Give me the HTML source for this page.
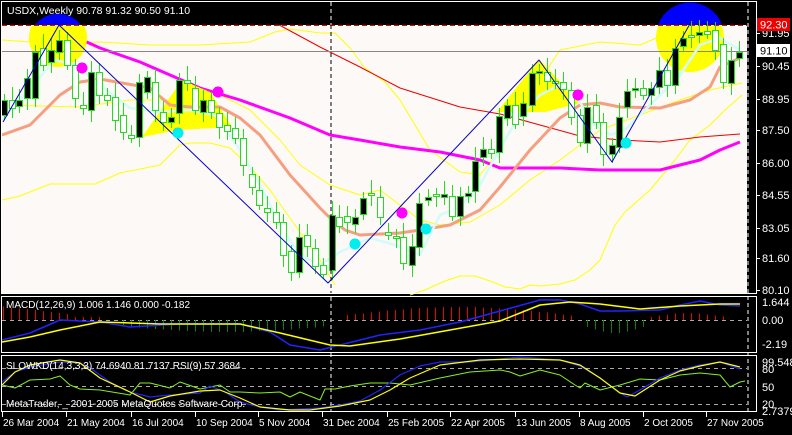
<!DOCTYPE html>
<html><head><meta charset="utf-8">
<style>
html,body{margin:0;padding:0;background:#000;}
body{width:792px;height:430px;overflow:hidden;font-family:"Liberation Sans",sans-serif;}
svg text{font-family:"Liberation Sans",sans-serif;font-size:10px;fill:#fff;}
</style></head>
<body>
<svg id="s" width="792" height="430" viewBox="0 0 792 430" xmlns="http://www.w3.org/2000/svg" shape-rendering="crispEdges">
<rect width="792" height="430" fill="#000"/>
<rect x="2" y="25" width="745" height="268" fill="#fdf9f7"/>
<g id="main"></g>
<text x="7" y="14" style="font-size:10.5px">USDX,Weekly  90.78 91.32 90.50 91.10</text>
<rect x="1.5" y="1.5" width="755" height="292" fill="none" stroke="#fff"/>
<rect x="1.5" y="296.5" width="755" height="56" fill="none" stroke="#fff"/>
<rect x="1.5" y="355.5" width="755" height="56" fill="none" stroke="#fff"/>
<line x1="748" y1="2" x2="748" y2="411" stroke="#fff" stroke-dasharray="4,3"/>
<line x1="331" y1="2" x2="331" y2="25" stroke="#fff" stroke-dasharray="4,3"/>
<line x1="331" y1="25" x2="331" y2="293" stroke="#000" stroke-dasharray="4,3"/>
<line x1="331" y1="297" x2="331" y2="411" stroke="#fff" stroke-dasharray="4,3"/>
<g id="axis"></g>
<rect x="757" y="18" width="33" height="13" fill="#e00"/>
<text x="760" y="28.5" style="fill:#fff;font-size:11px">92.30</text>
<rect x="756" y="44" width="34" height="13" fill="#fff"/>
<text x="760" y="54.5" style="fill:#000;font-size:11px">91.10</text>
<g id="macd"></g>
<g id="stoch"></g>
<text x="6" y="308">MACD(12,26,9) 1.006 1.146 0.000 -0.182</text>
<text x="6" y="369">SLOWKD(14,3,3,3) 74.6940 81.7137  RSI(9) 57.3684</text>
<text x="6" y="407">MetaTrader, _ 2001-2005 MetaQuotes Software Corp.</text>
<g id="dates"></g>
</svg>
<script>
const NS="http://www.w3.org/2000/svg";
function el(g,tag,attrs,txt){const e=document.createElementNS(NS,tag);for(const k in attrs)e.setAttribute(k,attrs[k]);if(txt!==undefined)e.textContent=txt;document.getElementById(g).appendChild(e);return e;}
function pl(g,pts,col,w,extra){const a={points:pts.map(p=>p.join(',')).join(' '),fill:'none',stroke:col,'stroke-width':w,'shape-rendering':'auto','stroke-linejoin':'round'};Object.assign(a,extra||{});el(g,'polyline',a);}
const M='main';
pl(M,[[2,200],[20,196],[50,184],[95,184],[120,173],[160,165],[180,145],[190,143],[210,143],[230,148],[250,167],[270,190],[300,232],[320,260],[335,285]],'#ff0',1);
pl(M,[[2,40],[60,44],[100,42],[150,45],[200,45],[250,42],[275,32],[290,29],[320,33],[335,33],[350,48],[365,68],[385,82],[400,100],[430,150],[460,172],[480,175],[500,150],[530,95],[560,50],[600,42],[640,45],[680,28],[720,18],[742,15]],'#ff0',1);
pl(M,[[2,105],[40,106],[80,107],[130,100],[170,100],[200,97],[220,95],[250,110],[280,140],[300,165],[330,185],[360,195],[380,190],[420,220],[440,225],[470,222],[500,205],[530,180],[560,160],[600,130],[640,115],[680,100],[710,90],[742,83]],'#ff0',1);
pl(M,[[410,295],[425,290],[445,281],[460,276],[475,276],[490,281],[505,287],[520,289],[530,285],[540,286],[560,284],[575,280],[590,270],[600,260],[615,225],[625,212],[650,190],[665,172],[675,160],[690,140],[710,125],[725,110],[742,95]],'#ff0',1);
pl(M,[[228,0],[270,20],[320,47],[360,67],[400,88],[460,107],[500,114],[540,125],[580,136],[620,140],[660,142],[700,137],[740,134]],'#e00',1);
pl(M,[[2,10],[30,20],[60,30],[100,48],[140,62],[200,88],[240,100],[290,118],[330,135],[360,140],[400,147],[440,152],[480,160],[500,168],[560,168],[600,170],[660,170],[700,160],[720,150],[740,142]],'#f0f',3);
el(M,'circle',{cx:58,cy:38,r:29,fill:'#ff0'});
el(M,'circle',{cx:690,cy:38,r:34,fill:'#ff0'});
el(M,'rect',{x:0,y:0,width:747,height:25,fill:'#000'});
el(M,'path',{d:'M35,25 A29,29 0 0 1 81,25 Z',fill:'#00f'});
el(M,'path',{d:'M658,25 A34,34 0 0 1 722,25 Z',fill:'#00f','shape-rendering':'auto'});
el(M,'polygon',{points:'142,137 182,80 210,92 232,127 178,130',fill:'#ff0'});
el(M,'polygon',{points:'497,112 539,59 580,103 545,112',fill:'#ff0'});
el(M,'line',{x1:2,y1:51.5,x2:747,y2:51.5,stroke:'#888'});
el(M,'line',{x1:2,y1:25.5,x2:747,y2:25.5,stroke:'#e00','stroke-dasharray':'5,3'});
pl(M,[[2,135],[30,125],[60,95],[80,82],[100,79],[150,88],[170,105],[190,107],[220,107],[240,118],[260,135],[290,175],[320,208],[330,218],[345,230],[360,235],[400,233],[420,230],[450,225],[480,210],[500,187],[530,150],[560,118],[580,105],[600,103],[620,107],[660,108],[690,100],[710,87],[720,67],[740,58]],'#f4a080',3);
pl(M,[[2,120],[30,88],[55,60],[75,65],[100,85],[130,108],[160,112],[190,110],[215,115],[240,150],[260,185],[280,225],[300,255],[320,265],[340,252],[370,238],[395,245],[420,255],[440,215],[460,207],[480,185],[500,148],[520,115],[540,95],[560,85],[575,95],[595,125],[610,135],[625,130],[650,105],[680,75],[700,45],[720,38],[740,50]],'#d4fafa',2.5);
const C=[[4,100,115,'b'],[12,100,108,'w'],[19,100,106,'b'],[27,78,98,'b'],[35,52,98,'b'],[43,48,65,'w'],[51,50,62,'b'],[59,40,52,'b'],[67,40,65,'w'],[75,65,98,'w'],[83,105,108,'w'],[91,72,110,'b'],[99,72,95,'w'],[107,95,100,'w'],[115,97,120,'w'],[123,115,132,'w'],[131,135,138,'w'],[139,82,137,'b'],[147,77,92,'b'],[155,82,110,'w'],[163,112,122,'w'],[171,117,122,'b'],[179,80,113,'b'],[187,80,83,'w'],[195,88,110,'w'],[203,100,112,'b'],[211,100,112,'w'],[219,113,127,'w'],[227,125,131,'w'],[235,128,138,'w'],[243,138,165,'w'],[252,174,187,'w'],[259,190,205,'w'],[267,208,212,'w'],[276,212,222,'w'],[283,222,255,'w'],[291,251,272,'w'],[299,237,272,'b'],[307,235,246,'w'],[315,248,266,'w'],[323,265,274,'w'],[332,215,270,'b'],[339,217,226,'w'],[347,216,222,'w'],[355,217,224,'b'],[363,198,214,'b'],[371,193,195,'w'],[380,197,217,'w'],[388,232,235,'w'],[396,236,238,'w'],[403,237,263,'w'],[412,246,265,'b'],[419,203,247,'b'],[428,197,200,'b'],[436,194,196,'w'],[444,194,197,'b'],[452,196,216,'w'],[460,196,216,'b'],[468,193,196,'b'],[475,161,191,'b'],[483,149,157,'b'],[491,149,153,'w'],[499,116,152,'b'],[507,105,118,'b'],[515,105,124,'w'],[523,103,116,'b'],[532,73,105,'b'],[539,71,73,'b'],[547,72,81,'w'],[555,81,83,'w'],[563,82,89,'w'],[571,90,117,'w'],[580,115,142,'w'],[587,107,143,'b'],[596,105,122,'w'],[603,122,154,'w'],[612,145,154,'b'],[619,117,147,'b'],[627,91,107,'b'],[635,88,90,'b'],[643,88,95,'w'],[651,88,95,'b'],[659,70,87,'b'],[667,70,85,'w'],[675,48,85,'b'],[683,38,46,'b'],[691,35,37,'w'],[699,32,35,'b'],[707,31,34,'w'],[715,30,50,'w'],[723,44,82,'w'],[731,60,83,'b'],[739,52,58,'b']];
C.forEach((c,i)=>{const [x,t,b,ty]=c;const wt=t-6-((i*7)%9),wb=b+5+((i*5)%8);
el(M,'line',{x1:x+0.5,y1:wt,x2:x+0.5,y2:wb,stroke:'#2d2'});
el(M,'rect',{x:x-2.5,y:t+0.5,width:6,height:Math.max(2,b-t),fill:ty=='b'?'#000':'#fff',stroke:'#2d2'});});
pl(M,[[3,122],[59,25],[328,283],[539,60],[612,162],[691,22]],'#00c',1);
[[82,68],[218,92],[402,213],[578,95]].forEach(p=>el(M,'circle',{cx:p[0],cy:p[1],r:5.5,fill:'#f0f'}));
[[178,133],[355,244],[426,229],[626,143]].forEach(p=>el(M,'circle',{cx:p[0],cy:p[1],r:5.5,fill:'#0ee'}));
[['91.95',33],['90.45',66],['88.95',99],['87.50',130],['86.00',163],['84.55',195],['83.05',228],['81.60',258],['80.10',290]].forEach(a=>{el('axis','text',{x:762,y:a[1]+4,style:'font-size:11px'},a[0]);el('axis','line',{x1:757,y1:a[1]+0.5,x2:760,y2:a[1]+0.5,stroke:'#fff'});});
[['1.644',302],['0.00',320],['-2.19',344]].forEach(a=>{el('axis','text',{x:762,y:a[1]+4,style:'font-size:11px'},a[0]);});
[['99.5484',362],['80',369],['50',387],['20',404],['2.7379',411]].forEach(a=>{el('axis','text',{x:762,y:a[1]+4,style:'font-size:11px'},a[0]);});
const Z='macd';
el(Z,'line',{x1:2,y1:320.5,x2:747,y2:320.5,stroke:'#aaa','stroke-dasharray':'4,4'});
for(let x=3;x<745;x+=8){let h=0;
 if(x<75)h=-(14-x*0.12);else if(x<100)h=-3;else if(x<120)h=0;else if(x<330)h=6+6*Math.sin((x-120)/210*Math.PI);else if(x<340)h=0;else if(x<575)h=-(4+9*Math.sin((x-340)/235*Math.PI));else if(x<580)h=0;else if(x<650)h=4+9*Math.sin((x-580)/70*Math.PI);else if(x<725)h=-(3+4*Math.sin((x-650)/75*Math.PI));
 if(h!=0)el(Z,'line',{x1:x+0.5,y1:320,x2:x+0.5,y2:320+h,stroke:h<0?'#e00':'#080'});}
pl(Z,[[2,340],[30,333],[60,320],[100,322],[130,327],[180,324],[240,324],[270,332],[290,345],[320,350],[340,345],[380,335],[420,330],[460,322],[500,311],[540,300],[560,300],[580,304],[600,311],[620,311],[660,310],[680,305],[700,301],[720,305],[740,306]],'#22f',1.5);
pl(Z,[[2,342],[30,337],[60,330],[100,322],[160,324],[240,324],[280,333],[330,345],[350,346],[400,339],[450,330],[500,321],[540,305],[570,302],[600,304],[640,309],[680,306],[720,304],[740,304]],'#ff0',1.5);
const S='stoch';
[368.5,386.5,404.5].forEach(y=>el(S,'line',{x1:2,y1:y,x2:747,y2:y,stroke:'#aaa','stroke-dasharray':'4,4'}));
pl(S,[[2,385],[15,388],[30,380],[50,379],[60,376],[70,385],[80,389],[100,390],[130,395],[140,383],[150,383],[170,388],[180,382],[200,389],[210,387],[220,385],[230,392],[240,392],[260,393],[280,392],[290,397],[300,392],[310,396],[320,400],[325,389],[335,389],[350,386],[370,383],[390,383],[410,385],[440,378],[470,372],[500,370],[510,372],[520,376],[540,370],[560,375],[575,385],[580,388],[585,383],[600,390],[620,385],[640,379],[660,380],[680,375],[700,373],[720,375],[730,387],[740,382],[745,381]],'#8e2',1);
pl(S,[[2,382],[15,372],[30,367],[60,362],[80,363],[90,368],[110,382],[130,392],[150,397],[170,395],[200,393],[210,386],[225,392],[240,402],[260,407],[280,410],[300,409],[320,408],[340,405],[360,401],[380,390],[400,375],[420,366],[440,362],[470,362],[500,359],[520,357],[560,360],[580,366],[600,378],[620,393],[627,397],[640,390],[660,378],[680,370],[700,365],[720,362],[740,369]],'#22f',1.2);
pl(S,[[2,385],[15,372],[30,365],[60,360],[80,363],[100,378],[130,392],[150,402],[170,396],[200,391],[220,390],[240,398],[260,407],[290,410],[310,410],[340,406],[370,400],[390,390],[410,378],[440,365],[480,360],[520,359],[560,360],[580,365],[600,378],[620,393],[635,396],[660,380],[680,371],[700,366],[720,362],[740,367]],'#ff0',1.2);
[['26 Mar 2004',2],['21 May 2004',66],['16 Jul 2004',131],['10 Sep 2004',195],['5 Nov 2004',258],['31 Dec 2004',322],['25 Feb 2005',387],['22 Apr 2005',450],['13 Jun 2005',515],['8 Aug 2005',579],['2 Oct 2005',643],['27 Nov 2005',706]].forEach(d=>{el('dates','text',{x:d[1]+1,y:426},d[0]);el('dates','line',{x1:d[1]+0.5,y1:412,x2:d[1]+0.5,y2:417,stroke:'#fff'});});
</script>
</body></html>
